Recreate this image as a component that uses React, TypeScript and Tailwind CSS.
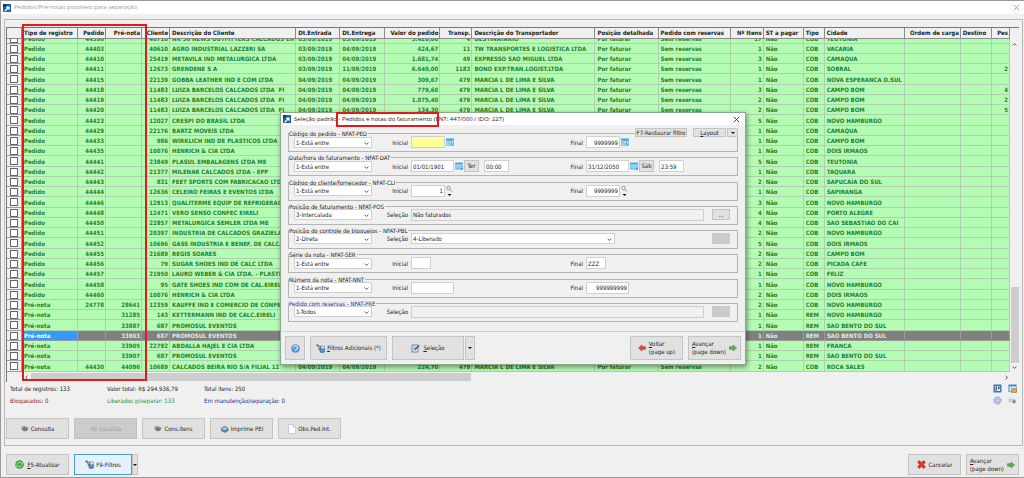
import type { ReactNode } from "react";

type Row = {
  tipo: string; pedido: string; pre?: string; cliente: string; nome: string;
  entrada?: string; entrega?: string; valor?: string; transp?: string; transportador?: string;
  itens: string; cob: string; cidade: string; pes?: string; active?: boolean;
};

const r = (pedido: string, cliente: string, nome: string, itens: string, cidade: string, extra: Partial<Row> = {}): Row => ({
  tipo: "Pedido", pedido, cliente, nome, itens, cidade, cob: "COB",
  entrada: "04/09/2019", entrega: "04/09/2019", valor: "134,30", transp: "479", transportador: "MARCIA L DE LIMA E SILVA",
  ...extra,
});

const rows: Row[] = [
  r("44398", "40710", "NR 36 NEWS OUTFITTERS CALCADOS EIREL", "17", "TEUTONIA", { entrada: "03/09/2019", entrega: "05/09/2019", valor: "5.420,00", transp: "4", transportador: "DESTINATARIO" }),
  r("44403", "40610", "AGRO INDUSTRIAL LAZZERI SA", "1", "VACARIA", { entrada: "03/09/2019", valor: "424,67", transp: "11", transportador: "TW TRANSPORTES E LOGISTICA LTDA" }),
  r("44410", "25419", "METAVILA IND METALURGICA LTDA", "3", "CAMAQUA", { entrada: "03/09/2019", valor: "1.681,74", transp: "49", transportador: "EXPRESSO SAO MIGUEL LTDA" }),
  r("44411", "12673", "GRENDENE S A", "1", "SOBRAL", { entrada: "03/09/2019", entrega: "11/09/2019", valor: "6.640,00", transp: "1183", transportador: "BONO EXP.TRAN.LOGIST.LTDA", pes: "2" }),
  r("44415", "22139", "GOBBA LEATHER IND E COM LTDA", "1", "NOVA ESPERANCA D.SUL", { valor: "309,67" }),
  r("44418", "11483", "LUIZA BARCELOS CALCADOS LTDA  FI", "3", "CAMPO BOM", { valor: "779,60", pes: "4" }),
  r("44419", "11483", "LUIZA BARCELOS CALCADOS LTDA  FI", "2", "CAMPO BOM", { valor: "1.075,40", pes: "2" }),
  r("44420", "11483", "LUIZA BARCELOS CALCADOS LTDA  FI", "2", "CAMPO BOM", { pes: "5" }),
  r("44423", "12027", "CRESPI DO BRASIL LTDA", "5", "NOVO HAMBURGO"),
  r("44429", "22176", "BARTZ MOVEIS LTDA", "1", "CAMAQUA"),
  r("44433", "986", "WIRKLICH IND DE PLASTICOS LTDA", "1", "CAMPO BOM"),
  r("44435", "10076", "HENRICH & CIA LTDA", "1", "DOIS IRMAOS"),
  r("44441", "23849", "PLASUL EMBALAGENS LTDA ME", "5", "TEUTONIA"),
  r("44442", "21377", "MILENAR CALCADOS LTDA - EPP", "1", "TAQUARA"),
  r("44443", "831", "FEET SPORTS COM FABRICACAO LTDA", "2", "SAPUCAIA DO SUL"),
  r("44444", "12636", "CELEIRO FEIRAS E EVENTOS LTDA", "1", "SAPIRANGA"),
  r("44446", "12913", "QUALITERME EQUIP DE REFRIGERACAO", "3", "NOVO HAMBURGO"),
  r("44448", "12471", "VERO SENSO CONFEC EIRELI", "4", "PORTO ALEGRE"),
  r("44450", "22857", "METALURGICA SEMLER LTDA ME", "4", "SAO SEBASTIAO DO CAI"),
  r("44451", "20397", "INDUSTRIA DE CALCADOS GRAZIELA", "2", "NOVO HAMBURGO"),
  r("44452", "10696", "GASS INDUSTRIA E BENEF. DE CALCADOS", "5", "DOIS IRMAOS"),
  r("44455", "21689", "REGIS SOARES", "2", "CAMPO BOM"),
  r("44456", "79", "SUGAR SHOES IND DE CALC LTDA", "2", "PICADA CAFE"),
  r("44457", "21950", "LAURO WEBER & CIA LTDA. - PLASTICOS", "1", "FELIZ"),
  r("44458", "95", "GATE SHOES IND COM DE CAL.EIRELI", "1", "NOVO HAMBURGO"),
  r("44460", "10076", "HENRICH & CIA LTDA", "2", "DOIS IRMAOS"),
  r("24778", "12359", "KAUFFE IND E COMERCIO DE CONFECCOES", "2", "NOVO HAMBURGO", { tipo: "Pré-nota", pre: "28641" }),
  r("", "143", "KETTERMANN IND DE CALC.EIRELI", "1", "NOVO HAMBURGO", { tipo: "Pré-nota", pre: "31285", cob: "REM" }),
  r("", "687", "PROMOSUL EVENTOS", "1", "SAO BENTO DO SUL", { tipo: "Pré-nota", pre: "33887", cob: "REM" }),
  r("", "687", "PROMOSUL EVENTOS", "1", "SAO BENTO DO SUL", { tipo: "Pré-nota", pre: "33903", cob: "REM", active: true }),
  r("", "22792", "ABDALLA HAJEL E CIA LTDA", "1", "FRANCA", { tipo: "Pré-nota", pre: "33905", cob: "REM" }),
  r("", "687", "PROMOSUL EVENTOS", "1", "SAO BENTO DO SUL", { tipo: "Pré-nota", pre: "33907", cob: "REM" }),
  r("44430", "10689", "CALCADOS BEIRA RIO S/A FILIAL 12", "2", "ROCA SALES", { tipo: "Pré-nota", pre: "44096", valor: "224,70" }),
];

const columns: { label: string; width: string; right?: boolean }[] = [
  { label: "", width: "w-[15px]" },
  { label: "Tipo de registro", width: "w-[56px]" },
  { label: "Pedido", width: "w-[28px]", right: true },
  { label: "Pré-nota", width: "w-[36px]", right: true },
  { label: "Cliente", width: "w-[28px]", right: true },
  { label: "Descrição do Cliente", width: "w-[126px]" },
  { label: "Dt.Entrada", width: "w-[44px]" },
  { label: "Dt.Entrega", width: "w-[45px]" },
  { label: "Valor do pedido", width: "w-[55px]", right: true },
  { label: "Transp.", width: "w-[32px]", right: true },
  { label: "Descrição do Transportador", width: "w-[123px]" },
  { label: "Posição detalhada", width: "w-[63px]" },
  { label: "Pedido com reservas", width: "w-[72px]" },
  { label: "Nº Itens", width: "w-[33px]", right: true },
  { label: "ST a pagar", width: "w-[40px]" },
  { label: "Tipo", width: "w-[21px]" },
  { label: "Cidade", width: "w-[80px]" },
  { label: "Ordem de carga", width: "w-[56px]", right: true },
  { label: "Destino", width: "w-[31px]" },
  { label: "Pes", width: "w-[18px]", right: true },
];

const cells = (x: Row) => [
  x.tipo, x.pedido, x.pre ?? "", x.cliente, x.nome, x.entrada, x.entrega, x.valor, x.transp, x.transportador,
  "Por faturar", "Sem reservas", x.itens, "Não", x.cob, x.cidade, "", "", x.pes ?? "",
];

/* ---------- icons ---------- */

const Logo = () => (
  <svg className="size-2 shrink-0" viewBox="0 0 16 16" aria-hidden="true">
    <rect width="16" height="16" rx="1" fill="#1d5fa8" />
    <path d="M0 0h7v6H0z" fill="#0d3a78" />
    <path d="M2 14 8 8 5 5h8v8l-3-3-5 5z" fill="#fff" />
  </svg>
);
const Close = ({ color }: { color: string }) => (
  <svg className="size-[7px]" viewBox="0 0 8 8" fill="none" stroke={color} strokeWidth="1" aria-hidden="true">
    <path d="m1 1 6 6M7 1 1 7" />
  </svg>
);
const Chevron = ({ className }: { className: string }) => (
  <svg className={className} viewBox="0 0 8 8" fill="none" stroke="#444" strokeWidth="1.4" aria-hidden="true">
    <path d="m1 2.5 3 3 3-3" />
  </svg>
);
const Caret = () => (
  <svg className="h-[2px] w-1 shrink-0" viewBox="0 0 8 4" aria-hidden="true"><path d="M0 0h8L4 4z" fill="#111" /></svg>
);
const Calendar = () => (
  <svg className="size-2 shrink-0" viewBox="0 0 16 16" aria-hidden="true">
    <rect x=".5" y="1.5" width="15" height="13" rx="1" fill="#7cc8f4" stroke="#58aee0" />
    <path d="M1 2h14v2H1z" fill="#4a9fda" />
    <path d="M3 7h10M3 10h10" stroke="#b9e3fb" strokeWidth="1.2" />
    <path d="M10 15h6v-4z" fill="#2c86c9" />
  </svg>
);
const Lookup = () => (
  <svg className="size-2 shrink-0" viewBox="0 0 16 16" aria-hidden="true">
    <rect x=".5" y="1.5" width="15" height="13" fill="#a9dcf8" stroke="#4a9fda" />
    <path d="M1 2h14v3H1z" fill="#4a9fda" />
    <circle cx="8" cy="9" r="3" fill="#e9f7ff" stroke="#4a8fbe" strokeWidth="1.4" />
    <path d="m10 11 4 3" stroke="#3a7fae" strokeWidth="1.6" />
  </svg>
);
const Magnifier = () => (
  <svg className="h-3 w-[7px] shrink-0" viewBox="0 0 14 24" aria-hidden="true">
    <circle cx="5" cy="6" r="3.6" fill="#e4f0f8" stroke="#6b7f8f" strokeWidth="1.5" />
    <path d="m8 9 4 4" stroke="#6b7f8f" strokeWidth="2" />
    <path d="M3 18h8l-4 4z" fill="#111" />
  </svg>
);
const Eye = ({ muted = false }: { muted?: boolean }) => (
  <svg className="size-2 shrink-0" viewBox="0 0 16 16" fill="none" stroke={muted ? "#aaa" : "#3c4650"} aria-hidden="true">
    <path d="M1 5c3-2 8-3 14 2M1 7c2 4 7 7 13 2" strokeWidth="1.3" />
    <circle cx="6.500" cy="7.500" r="2.600" fill={muted ? "#bbb" : "#4f7f9d"} />
    <circle cx="11" cy="8" r="1.500" fill={muted ? "#bbb" : "#4f7f9d"} />
  </svg>
);
const Printer = () => (
  <svg className="size-[9px] shrink-0" viewBox="0 0 20 20" aria-hidden="true">
    <path d="M2 3h8l2 7H3z" fill="#fff" stroke="#9aa5b0" />
    <path d="m3 10 6-5 9 4v6l-7 4-8-4z" fill="#4f84b4" stroke="#33587a" />
    <path d="m4 11 7 3 6-4-7-3z" fill="#b5d0e6" />
  </svg>
);
const Page = () => (
  <svg className="h-[10px] w-2 shrink-0" viewBox="0 0 16 20" aria-hidden="true">
    <path d="M1 1h9l5 5v13H1z" fill="#fff" stroke="#9aa7b3" />
    <path d="M10 1v5h5" fill="#dbe5ee" stroke="#9aa7b3" />
  </svg>
);
const Refresh = () => (
  <svg className="size-[9px] shrink-0" viewBox="0 0 18 18" aria-hidden="true">
    <circle cx="9" cy="9" r="8.500" fill="#2fa53a" />
    <path d="M4.500 9a4.500 4.500 0 0 1 7.500-3.200M13.500 9A4.500 4.500 0 0 1 6 12.200" fill="none" stroke="#e9ffe9" strokeWidth="1.600" />
    <path d="M11 7h4V4zM7 11H3v3z" fill="#e9ffe9" />
  </svg>
);
const Filter = () => (
  <svg className="size-[9px] shrink-0" viewBox="0 0 18 18" aria-hidden="true">
    <path d="M1 1h4v3H1z" fill="#555" />
    <path d="M3 4h8l-3 4v4l-2-1V8z" fill="#a7b4bf" stroke="#4d5a66" />
    <path d="M8 8h9v8l-5 2-4-2z" fill="#5f90bc" stroke="#33587a" />
    <path d="M10 4h7v5l-4 1-3-2z" fill="#dcebf7" stroke="#33587a" strokeWidth=".8" />
  </svg>
);
const Edit = () => (
  <svg className="size-[9px] shrink-0" viewBox="0 0 18 18" aria-hidden="true">
    <path d="M2 2h12v14H2z" fill="#eaf2fa" stroke="#3d5f80" strokeWidth="1.400" />
    <path d="M4 6h6M4 9h4M4 12h7" stroke="#5b7fa0" strokeWidth="1.200" />
    <path d="m7 12 1-3 7-7 2 2-7 7z" fill="#3c4f63" />
  </svg>
);
const Help = () => (
  <svg className="size-[9px] shrink-0" viewBox="0 0 18 18" aria-hidden="true">
    <circle cx="9" cy="9" r="8" fill="#5d9bd0" stroke="#5580a8" />
    <path d="M5 7a4 4 0 1 1 5 4l-1 2" fill="none" stroke="#e6f3fd" strokeWidth="2.200" />
  </svg>
);
const Arrow = ({ color, edge, left = false }: { color: string; edge: string; left?: boolean }) => (
  <svg className="size-2 shrink-0" viewBox="0 0 18 18" aria-hidden="true">
    <path
      d={left ? "M1 9l8-7v4h8v6H9v4z" : "M17 9l-8 7v-4H1V6h8V2z"}
      fill={color} stroke={edge} strokeWidth="1" strokeLinejoin="round"
    />
  </svg>
);
const RedX = () => (
  <svg className="size-[9px] shrink-0" viewBox="0 0 18 18" aria-hidden="true">
    <path d="M1 4l4-3 4 4 4-4 4 3-4 5 4 5-4 3-4-4-4 4-4-3 4-5z" fill="#dd3a22" stroke="#a11e10" />
  </svg>
);
const PanelIcon = () => (
  <svg className="size-[9px]" viewBox="0 0 18 18" aria-hidden="true">
    <rect x="1" y="1" width="16" height="16" fill="#2e7fc2" />
    <path d="M4 4h10v10H4z" fill="#dcecf8" />
    <path d="M5 5h3v8H5z" fill="#c8402b" /><path d="M10 5h3v5h-3z" fill="#25527a" />
  </svg>
);
const SaveIcon = () => (
  <svg className="size-[9px]" viewBox="0 0 18 18" aria-hidden="true">
    <rect x="1" y="1" width="16" height="15" fill="#3b8ccc" />
    <path d="M3 5h13v10H3z" fill="#e8f2fa" /><path d="M7 9h10v8H7z" fill="#e2ab45" stroke="#8a6420" />
  </svg>
);
const Gear = () => (
  <svg className="size-[9px]" viewBox="0 0 18 18" aria-hidden="true">
    <circle cx="9" cy="9" r="6" fill="#c9c8ea" stroke="#9a98d0" strokeWidth="1.500" />
    <circle cx="9" cy="9" r="7.500" fill="none" stroke="#9a98d0" strokeWidth="2" strokeDasharray="2.900 3" />
    <circle cx="9" cy="9" r="2.400" fill="#f4f4ff" stroke="#8886c4" />
  </svg>
);
const Key = () => (
  <svg className="size-[9px]" viewBox="0 0 18 18" aria-hidden="true">
    <path d="M2 6h8l5 2v6l-5 1-3-4H2z" fill="#d3dae0" stroke="#9aa5ae" />
    <circle cx="12" cy="11" r="2.600" fill="#5e7d99" />
  </svg>
);

/* ---------- controls ---------- */

const buttonBase = "flex items-center justify-center border border-[#c4c4c4] bg-[#e1e1e1] text-[6px] leading-[8px] text-[#222] whitespace-nowrap";

function Button({ children, className }: { children: ReactNode; className: string }) {
  return <button type="button" className={`${buttonBase} ${className}`}>{children}</button>;
}

function Drop({ id, value, label, className }: { id: string; value: string; label: string; className: string }) {
  return (
    <div className={`relative ${className}`}>
      <select id={id} aria-label={label} defaultValue={value} className="block h-[11px] w-full appearance-none border border-[#d0d0d0] bg-white pl-px text-[6px] leading-[9px] text-[#222]">
        <option>{value}</option>
      </select>
      <Chevron className="pointer-events-none absolute right-[3px] top-[4px] size-[5px]" />
    </div>
  );
}

function Field({ id, value = "", label, className }: { id: string; value?: string; label?: string; className: string }) {
  return (
    <input id={id} aria-label={label} defaultValue={value} className={`h-3 shrink-0 border border-[#d0d0d0] px-px text-[6px] leading-[10px] text-[#222] ${className}`} />
  );
}

function Group({ code, title, mode, blue = false, children }: { code: string; title: string; mode: string; blue?: boolean; children: ReactNode }) {
  return (
    <fieldset className="relative flex h-[19px] items-center border border-[#b4b4b4] pl-[5px] pt-[2px]">
      <legend className={`absolute -top-1 left-0 bg-[#f0f0f0] pr-px text-[6px] leading-[7px] ${blue ? "text-[#2a2a9a]" : "text-[#222]"}`}>
        {title} - {code}
      </legend>
      <Drop id={`${code}-modo`} value={mode} label={`${title}: modo`} className="w-[78px]" />
      {children}
    </fieldset>
  );
}

const FirstLabel = ({ id, children }: { id: string; children: ReactNode }) => (
  <label htmlFor={id} className="mr-[3px] w-9 text-right text-[6px] leading-[7px] text-[#222]">{children}</label>
);
const Range = ({ code, start, end }: { code: string; start: ReactNode; end: ReactNode }) => (
  <>
    <FirstLabel id={`${code}-ini`}>Inicial</FirstLabel>
    <div className="flex w-[133px] items-center gap-px">{start}</div>
    <label htmlFor={`${code}-fim`} className="mr-[3px] w-[39px] text-right text-[6px] leading-[7px] text-[#222]">Final</label>
    <div className="flex items-center gap-px">{end}</div>
  </>
);
const MoreButton = ({ disabled, className }: { disabled: boolean; className: string }) => (
  <button type="button" disabled={disabled} aria-label="Mais opções" className={`h-[11px] w-[18px] border text-[6px] leading-[8px] ${disabled ? "border-[#c8c8c8] bg-[#cccccc] text-[#b4b4b4]" : "border-[#c4c4c4] bg-[#e1e1e1] text-[#333]"} ${className}`}>
    ...
  </button>
);
const Choice = ({ code, value, disabled }: { code: string; value: string; disabled: boolean }) => (
  <>
    <FirstLabel id={`${code}-sel`}>Seleção</FirstLabel>
    <Field id={`${code}-sel`} value={value} className="w-[293px] bg-[#f0f0f0]" />
    <MoreButton disabled={disabled} className="ml-2" />
  </>
);

function FilterDialog() {
  return (
    <section role="dialog" aria-label="Seleção padrão" className="absolute left-[279px] top-[111px] w-[466px] border border-[#8aa88a] bg-[#f0f0f0] shadow-[1px_2px_5px_rgba(0,0,0,0.45)]">
      <header className="flex h-3 items-center bg-white pl-[2px] pr-[5px] font-['Open_Sans',sans-serif]">
        <Logo />
        <h2 className="ml-[3px] flex-1 text-[6px] leading-[12px] text-[#222]">Seleção padrão - Pedidos e notas do faturamento (ENT: 447/000 / IDO: 227)</h2>
        <button type="button" aria-label="Fechar seleção"><Close color="#222" /></button>
      </header>
      <div className="absolute left-[55px] -top-px h-[15px] w-[103px] border-2 border-[#e01b1b]" />

      <div className="relative mx-[7px] mt-2 flex h-[189px] flex-col justify-between">
        <Group code="NFAT-PED" title="Código do pedido" mode="1-Está entre">
          <Range code="NFAT-PED"
            start={<><Field id="NFAT-PED-ini" className="w-[34px] bg-[#ffff99]" /><Lookup /></>}
            end={<><Field id="NFAT-PED-fim" value="9999999" className="w-[34px] bg-white text-right" /><Lookup /></>} />
        </Group>
        <Group code="NFAT-DAT" title="Data/hora do faturamento" mode="1-Está entre">
          <Range code="NFAT-DAT"
            start={<><Field id="NFAT-DAT-ini" value="01/01/1901" className="w-[43px] bg-white" /><Calendar /><Button className="h-3 w-[15px]">Ter</Button><Field id="hora-ini" label="Hora inicial" value="00:00" className="ml-1 w-[25px] bg-white" /></>}
            end={<><Field id="NFAT-DAT-fim" value="31/12/2050" className="w-[43px] bg-white" /><Calendar /><Button className="h-3 w-[15px]">Sáb</Button><Field id="hora-fim" label="Hora final" value="23:59" className="ml-1 w-[25px] bg-white" /></>} />
        </Group>
        <Group code="NFAT-CLI" title="Código do cliente/fornecedor" mode="1-Está entre">
          <Range code="NFAT-CLI"
            start={<><Field id="NFAT-CLI-ini" value="1" className="w-[34px] bg-white text-right" /><Magnifier /></>}
            end={<><Field id="NFAT-CLI-fim" value="9999999" className="w-[34px] bg-white text-right" /><Magnifier /></>} />
        </Group>
        <Group code="NFAT-POS" title="Posição de faturamento" mode="3-Intercalada">
          <Choice code="NFAT-POS" value="Não faturados" disabled={false} />
        </Group>
        <Group code="NFAT-PBL" title="Posição do controle de bloqueios" mode="2-Direta">
          <FirstLabel id="NFAT-PBL-sel">Seleção</FirstLabel>
          <Drop id="NFAT-PBL-sel" value="4-Liberado" label="Seleção" className="w-[204px]" />
          <MoreButton disabled className="ml-[97px]" />
        </Group>
        <Group code="NFAT-SER" title="Série da nota" mode="1-Está entre">
          <Range code="NFAT-SER"
            start={<Field id="NFAT-SER-ini" className="w-5 bg-white" />}
            end={<Field id="NFAT-SER-fim" value="ZZZ" className="w-5 bg-white" />} />
        </Group>
        <Group code="NFAT-NNT" title="Número da nota" mode="1-Está entre">
          <Range code="NFAT-NNT"
            start={<Field id="NFAT-NNT-ini" className="w-[43px] bg-white" />}
            end={<Field id="NFAT-NNT-fim" value="999999999" className="w-[43px] bg-white text-right" />} />
        </Group>
        <Group code="NFAT-PRE" title="Pedido com reservas" mode="1-Todos" blue>
          <Choice code="NFAT-PRE" value="" disabled />
        </Group>
        <div className="absolute -top-[5px] right-0 flex bg-[#f0f0f0]">
          <Button className="h-[9px] w-[52px]">F7-Restaurar filtro</Button>
          <Button className="ml-[6px] h-[9px] w-[33px]"><span><u>L</u>ayout</span></Button>
          <Button className="ml-px h-[9px] w-[11px]"><Caret /></Button>
        </div>
      </div>

      <footer className="mt-[9px] flex border-t border-[#cfcfcf] px-1 py-1">
        <Button className="h-6 w-5"><Help /></Button>
        <Button className="ml-[5px] h-6 w-[77px] gap-[2px]"><Filter /><span><u>F</u>iltros Adicionais (*)</span></Button>
        <Button className="ml-[5px] h-6 w-[72px] gap-[3px]"><Edit /><span><u>S</u>eleção</span></Button>
        <Button className="ml-px h-6 w-[10px]"><Caret /></Button>
        <Button className="ml-auto h-6 w-[53px] gap-[3px]"><Arrow left color="#e2413c" edge="#b32a26" /><span className="text-left"><u>V</u>oltar<br />(page up)</span></Button>
        <Button className="ml-[5px] h-6 w-[53px] gap-[3px]"><span className="text-left"><u>A</u>vançar<br />(page down)</span><Arrow color="#52b43c" edge="#2e7d20" /></Button>
      </footer>
    </section>
  );
}

function OrdersTable() {
  return (
    <table className="w-full table-fixed border-separate border-spacing-0 text-[6px] font-bold">
      <colgroup>{columns.map((c, i) => <col key={i} className={c.width} />)}</colgroup>
      <thead>
        <tr>
          {columns.map((c, i) => (
            <th key={i} scope="col" className={`h-[11px] whitespace-nowrap border-b border-r border-[#8c8c8c] bg-[#f0f0f0] py-0 pl-[2px] pr-px leading-[10px] text-[#222] ${c.right ? "text-right" : "text-left"}`}>
              {c.label}
            </th>
          ))}
        </tr>
      </thead>
      <tbody>
        {rows.map((row, n) => {
          const clip = n === 0;
          const tall = n > 0 && n % 4 === 0;
          const size = clip ? "h-1" : tall ? "h-[10px]" : "h-[9px]";
          return (
            <tr key={n} aria-selected={row.active}>
              <td className="border-b border-r border-[#9c9c9c] bg-[#f0f0f0] p-0">
                <div className={`flex justify-center overflow-hidden ${clip ? "items-end" : "items-center"} ${size}`}>
                  <input type="checkbox" aria-label={`Marcar registro ${row.pre ?? row.pedido}`} className="size-2 shrink-0 appearance-none border border-[#666] bg-white" />
                </div>
              </td>
              {cells(row).map((v, i) => {
                const tone = row.active
                  ? i === 0 ? "border-[#9a9a9a] bg-[#3399ff] text-white" : "border-[#9a9a9a] bg-[#808080] text-[#dcefdc]"
                  : "border-[#add0ad] bg-[#b4fcb4] text-[#26802f]";
                return (
                  <td key={i} className={`border-b border-r py-0 pl-[2px] pr-px ${tone}`}>
                    <div className={`flex overflow-hidden whitespace-pre leading-[9px] ${clip ? "items-end" : "items-center"} ${columns[i + 1].right ? "justify-end" : ""} ${size}`}>
                      {v}
                    </div>
                  </td>
                );
              })}
            </tr>
          );
        })}
      </tbody>
    </table>
  );
}

export default function App() {
  return (
    <div className="relative flex min-h-screen flex-col overflow-hidden border-b border-l border-t border-[#9a9a9a] bg-[#f0f0f0] font-['DejaVu_Sans_Condensed','DejaVu_Sans',sans-serif] text-[6px]">
      <header className="flex h-[13px] shrink-0 items-center bg-white pl-[2px] pr-1 font-['Open_Sans',sans-serif]">
        <Logo />
        <h1 className="ml-[3px] flex-1 text-[6px] leading-[13px] text-[#9a9a9a]">Pedidos/Pré-notas possíveis para separação</h1>
        <button type="button" aria-label="Fechar"><Close color="#999" /></button>
      </header>

      <main className="ml-[3px] mr-px mt-[5px] border border-[#b8b8b8] pb-[6px] pl-px pr-[3px] pt-[7px]">
        <div className="border-l border-t border-[#777]">
          <div className="flex">
            <div className="min-w-0 flex-1"><OrdersTable /></div>
            <div className="flex w-[9px] flex-col items-center pt-3">
              <button type="button" aria-label="Rolar para cima" className="pt-[2px]"><Chevron className="size-[5px] rotate-180" /></button>
              <div className="mt-auto h-[76px] w-2 bg-[#cdcdcd]" />
              <button type="button" aria-label="Rolar para baixo" className="py-[2px]"><Chevron className="size-[5px]" /></button>
            </div>
          </div>
          <div className="flex h-[10px] items-center pl-[17px] pr-[10px]">
            <button type="button" aria-label="Rolar para a esquerda"><Chevron className="size-[5px] rotate-90" /></button>
            <div className="ml-[2px] h-2 w-[440px] bg-[#cdcdcd]" />
            <button type="button" aria-label="Rolar para a direita" className="ml-auto"><Chevron className="size-[5px] -rotate-90" /></button>
          </div>
        </div>

        <div className="flex justify-between pl-1 pr-[2px] pt-[2px]">
          <div className="grid grid-cols-[97px_97px_auto] gap-y-[3px] leading-[9px] text-[#222]">
            <span>Total de registros: 133</span><span>Valor total: R$ 294.936,79</span><span>Total itens: 250</span>
            <span className="text-[#8e2020]">Bloqueados: 0</span><span className="text-[#2c8f2c]">Liberados p/separar: 133</span><span className="text-[#25258e]">Em manutenção/separação: 0</span>
          </div>
          <div className="grid grid-cols-2 gap-x-[6px] gap-y-[3px]">
            <button type="button" aria-label="Painel"><PanelIcon /></button>
            <button type="button" aria-label="Salvar layout"><SaveIcon /></button>
            <button type="button" aria-label="Configurações"><Gear /></button>
            <button type="button" aria-label="Ferramentas"><Key /></button>
          </div>
        </div>

        <div className="mt-[13px] flex gap-[5px]">
          <Button className="h-[21px] w-[63px] gap-[2px]"><Eye />Consulta</Button>
          <button type="button" disabled className="flex h-[21px] w-[63px] items-center justify-center gap-[2px] border border-[#c2c2c2] bg-[#cccccc] text-[6px] leading-[8px] text-[#999]"><Eye muted />Localiza</button>
          <Button className="h-[21px] w-[63px] gap-[2px]"><Eye />Cons.itens</Button>
          <Button className="h-[21px] w-[63px] gap-[2px]"><Printer />Imprime PEI</Button>
          <Button className="h-[21px] w-[63px] gap-[2px]"><Page />Obs.Ped.Int.</Button>
        </div>
      </main>

      <footer className="flex pb-[2px] pl-[5px] pr-[5px] pt-2">
        <Button className="h-[21px] w-[63px] gap-[3px]"><Refresh /><span><u>F</u>5-Atualizar</span></Button>
        <button type="button" className="ml-[5px] flex h-[21px] w-[58px] items-center justify-center gap-[2px] border border-[#4a9bd4] bg-[#e5f1fb] text-[6px] leading-[8px] text-[#222]"><Filter />F9-Filtros</button>
        <Button className="h-[21px] w-[6px]"><Caret /></Button>
        <Button className="ml-auto h-[21px] w-[53px] gap-[3px]"><RedX />Cancelar</Button>
        <Button className="ml-[5px] h-[21px] w-[53px] gap-[3px]"><span className="text-left"><u>A</u>vançar<br />(page down)</span><Arrow color="#52b43c" edge="#2e7d20" /></Button>
      </footer>

      <div className="pointer-events-none absolute left-[21px] top-[23px] h-[357px] w-[125px] border-2 border-[#e01b1b]" />
      <FilterDialog />
    </div>
  );
}
